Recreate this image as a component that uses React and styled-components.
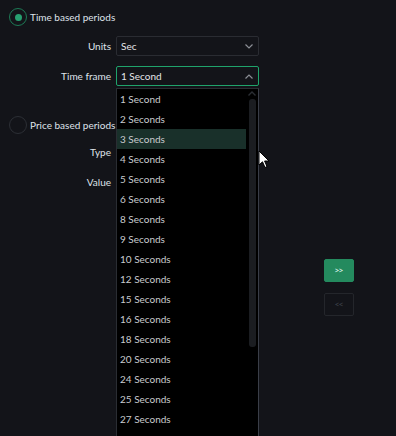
import styled, { createGlobalStyle } from "styled-components";

const secondsList = [1, 2, 3, 4, 5, 6, 8, 9, 10, 12, 15, 16, 18, 20, 24, 25, 27];

const App = () => {
  return (
    <>
      <GlobalStyle />
      <Page>
        <FormColumn>
          <RadioRow>
            <Radio checked />
            <RadioText>Time based periods</RadioText>
          </RadioRow>
          <FieldRow>
            <Label>Units</Label>
            <SelectBox>
              <span>Sec</span>
              <Chevron />
            </SelectBox>
          </FieldRow>
          <FieldRow>
            <Label>Time frame</Label>
            <SelectWrap>
              <SelectBox $open>
                <span>1 Second</span>
                <Chevron up />
              </SelectBox>
              <Dropdown>
                <OptionList>
                  {secondsList.map((n, i) => (
                    <Option key={n} $active={i === 2}>
                      {n === 1 ? "1 Second" : `${n} Seconds`}
                    </Option>
                  ))}
                </OptionList>
                <ScrollTrack>
                  <ScrollArrow />
                  <ScrollThumb />
                </ScrollTrack>
              </Dropdown>
            </SelectWrap>
          </FieldRow>
          <RadioRow $top={20}>
            <Radio />
            <RadioText>Price based periods</RadioText>
          </RadioRow>
          <FieldRow $top={-2}>
            <Label>Type</Label>
            <SelectBox $hidden />
          </FieldRow>
          <FieldRow>
            <Label>Value</Label>
            <SelectBox $hidden />
          </FieldRow>
        </FormColumn>
        <ButtonColumn>
          <MoveBtn $primary>&gt;&gt;</MoveBtn>
          <MoveBtn>&lt;&lt;</MoveBtn>
        </ButtonColumn>
        <Cursor />
      </Page>
    </>
  );
};

const Chevron = ({ up }) => (
  <ChevronSvg viewBox="0 0 8 5" width="8" height="5">
    <path
      d={up ? "M0.5 4.5 L4 1 L7.5 4.5" : "M0.5 0.5 L4 4 L7.5 0.5"}
      fill="none"
      stroke="#8c8f96"
      strokeWidth="1.2"
    />
  </ChevronSvg>
);

const ScrollArrow = () => (
  <svg viewBox="0 0 8 5" width="8" height="5">
    <path d="M0.5 4.5 L4 1 L7.5 4.5" fill="none" stroke="#2b2e34" strokeWidth="1.4" />
  </svg>
);

const Cursor = () => (
  <CursorSvg viewBox="0 0 12 19" width="12" height="19">
    <path
      d="M1 1 L1 15 L4.5 11.8 L7 17.5 L9 16.6 L6.6 11 L11 11 Z"
      fill="#ffffff"
      stroke="#000000"
      strokeWidth="1"
    />
  </CursorSvg>
);

const GlobalStyle = createGlobalStyle`
  html, body {
    margin: 0;
    padding: 0;
    background: #131419;
  }
  body {
    font-family: Lato, "Open Sans", sans-serif;
    overflow: hidden;
  }
`;

const Page = styled.div`
  position: relative;
  display: flex;
  width: 396px;
  height: 436px;
  overflow: hidden;
  background: #131419;
`;

const FormColumn = styled.div`
  display: flex;
  flex-direction: column;
  gap: 10px;
  padding: 8px 0 0 9px;
  width: 250px;
`;

const RadioRow = styled.div`
  display: flex;
  align-items: center;
  gap: 3px;
  height: 18px;
  margin-top: ${(p) => p.$top || 0}px;
`;

const Radio = styled.span`
  box-sizing: border-box;
  width: 18px;
  height: 18px;
  border-radius: 50%;
  border: 1.5px solid ${(p) => (p.checked ? "#1d7a55" : "#2c2f35")};
  display: flex;
  align-items: center;
  justify-content: center;
  &::after {
    content: "";
    display: ${(p) => (p.checked ? "block" : "none")};
    width: 7px;
    height: 7px;
    border-radius: 50%;
    background: #27a070;
  }
`;

const RadioText = styled.span`
  font-size: 10px;
  color: #dfe3ea;
`;

const FieldRow = styled.div`
  display: flex;
  align-items: center;
  gap: 5px;
  margin-top: ${(p) => p.$top || 0}px;
`;

const Label = styled.span`
  width: 102px;
  text-align: right;
  font-size: 10px;
  color: #dfe3ea;
`;

const SelectWrap = styled.div`
  position: relative;
`;

const SelectBox = styled.div`
  box-sizing: border-box;
  width: 143px;
  height: 20px;
  display: flex;
  align-items: center;
  justify-content: space-between;
  padding: 0 4px 0 4px;
  border: 1px solid ${(p) => (p.$open ? "#1fa36b" : "#2a2c32")};
  border-radius: 2px;
  background: #131419;
  font-size: 10px;
  color: #e4e6ea;
  visibility: ${(p) => (p.$hidden ? "hidden" : "visible")};
`;

const ChevronSvg = styled.svg`
  margin-right: 1px;
`;

const Dropdown = styled.div`
  position: absolute;
  top: 22px;
  left: 0;
  box-sizing: border-box;
  width: 143px;
  height: 400px;
  display: flex;
  background: #000000;
  border: 1px solid #2a2d33;
  border-right-color: #3a3e48;
  z-index: 2;
`;

const OptionList = styled.div`
  flex: 1;
  display: flex;
  flex-direction: column;
`;

const Option = styled.div`
  height: 20px;
  display: flex;
  align-items: center;
  padding-left: 3px;
  font-size: 10px;
  color: #c9cbcf;
  background: ${(p) => (p.$active ? "#19302a" : "transparent")};
`;

const ScrollTrack = styled.div`
  width: 12px;
  display: flex;
  flex-direction: column;
  align-items: center;
  padding-top: 2px;
  gap: 3px;
`;

const ScrollThumb = styled.div`
  width: 7px;
  height: 248px;
  border-radius: 3px;
  background: #1b1d21;
`;

const ButtonColumn = styled.div`
  display: flex;
  flex-direction: column;
  gap: 11px;
  padding: 259px 0 0 65px;
`;

const MoveBtn = styled.button`
  box-sizing: border-box;
  width: 30px;
  height: 23px;
  padding: 0;
  border-radius: 2px;
  font-family: "Open Sans", sans-serif;
  font-size: 7px;
  font-weight: 700;
  border: 1px solid ${(p) => (p.$primary ? "#248a5e" : "#24262b")};
  background: ${(p) => (p.$primary ? "#248a5e" : "transparent")};
  color: ${(p) => (p.$primary ? "#d7efe4" : "#3a3e46")};
`;

const CursorSvg = styled.svg`
  position: absolute;
  left: 258px;
  top: 150px;
  z-index: 5;
`;

export default App;
